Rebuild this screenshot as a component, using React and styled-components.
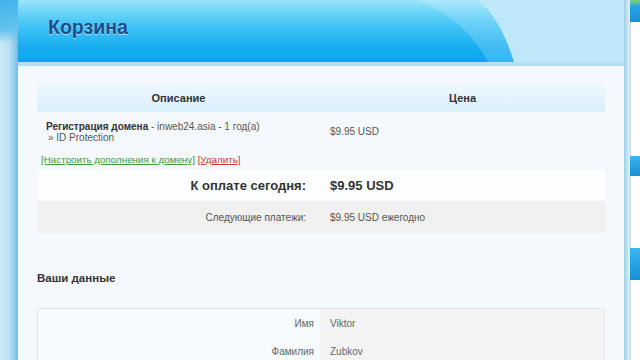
import React from "react";
import styled, { createGlobalStyle } from "styled-components";

const Global = createGlobalStyle`
  html, body {
    margin: 0;
    padding: 0;
    width: 640px;
    height: 360px;
    overflow: hidden;
    background: #f5f9fd;
    font-family: "Liberation Sans", Arial, sans-serif;
    color: #333;
  }
`;

const Page = styled.div`
  display: flex;
  width: 640px;
  height: 360px;
  overflow: hidden;
`;

const LeftStrip = styled.div`
  width: 18px;
  flex: none;
  background:
    linear-gradient(170deg, #3fb3e9 0, #64c3ee 30px, rgba(255, 255, 255, 0) 44px),
    linear-gradient(90deg, #cfeaf7 0, #b9e0f3 9px, #8ccbea 15px, #6fbbe3 18px);
`;

const Main = styled.div`
  width: 606px;
  flex: none;
  background: #f5f9fd;
`;

const Header = styled.div`
  position: relative;
  height: 62px;
  background: linear-gradient(180deg, #9ae3fb 0, #4cc8f6 22px, #16adf0 48px, #0aa7ee 62px);
  border-bottom: 4px solid #b5def0;
  overflow: hidden;
`;

const Wave = styled.svg`
  position: absolute;
  top: 0;
  left: 0;
  width: 606px;
  height: 62px;
`;

const Title = styled.h1`
  position: relative;
  margin: 0;
  padding: 16px 0 0 30px;
  font-size: 19.5px;
  font-weight: bold;
  color: #1b4d8d;
  text-shadow: 0 1px 1px rgba(255, 255, 255, 0.6);
`;

const Content = styled.div`
  padding: 18px 19px 0;
`;

const Table = styled.div`
  width: 568px;
`;

const HeadRow = styled.div`
  display: grid;
  grid-template-columns: 283px 285px;
  height: 28px;
  align-items: center;
  background: linear-gradient(180deg, #edf8fe 0, #d9effc 100%);
  font-size: 11px;
  font-weight: bold;
  color: #333;
  text-align: center;
`;

const ItemRow = styled.div`
  display: grid;
  grid-template-columns: 283px 285px;
  height: 38px;
  align-items: center;
  font-size: 10px;
  color: #555;
`;

const ItemDesc = styled.div`
  padding-left: 9px;
  line-height: 11px;
  margin-top: 2px;
  b {
    color: #333;
  }
`;

const Addon = styled.div`
  padding-left: 2px;
`;

const Cell = styled.div`
  padding-left: 10px;
`;

const Links = styled.div`
  padding: 4px 0 0 4px;
  height: 16px;
  font-size: 9.8px;
`;

const Link = styled.a`
  color: ${(p) => p.$color};
  text-decoration: underline;
  cursor: pointer;
`;

const SumRow = styled.div`
  display: grid;
  grid-template-columns: 283px 285px;
  height: ${(p) => p.$h}px;
  align-items: center;
  background: ${(p) => p.$bg};
  font-size: ${(p) => p.$size}px;
  font-weight: ${(p) => (p.$bold ? "bold" : "normal")};
  color: ${(p) => (p.$bold ? "#333" : "#555")};
`;

const SumLabel = styled.div`
  text-align: right;
  padding-right: 14px;
`;

const Section = styled.h2`
  margin: 39px 0 0;
  font-size: 11.5px;
  font-weight: bold;
  color: #333;
`;

const FormBox = styled.div`
  margin-top: 24px;
  width: 566px;
  border: 1px solid #dfe5ea;
  border-radius: 3px;
  background: linear-gradient(90deg, #f8fbfd 0, #f8fbfd 282px, #f4f4f4 282px);
`;

const FormRow = styled.div`
  display: grid;
  grid-template-columns: 276px 290px;
  height: 28px;
  align-items: center;
  font-size: 10px;
  color: #666;
`;

const FieldLabel = styled.div`
  text-align: right;
`;

const FieldValue = styled.div`
  padding-left: 16px;
`;

const RightStrip = styled.div`
  width: 16px;
  flex: none;
  display: flex;
  flex-direction: column;
  background: linear-gradient(90deg, #9ccfea 0, #d8ecf6 5px, #f2f8fc 9px, #ffffff 16px);
`;

const Block = styled.div`
  height: ${(p) => p.$h}px;
  margin-left: 6px;
  background: ${(p) => p.$bg};
  border-left: ${(p) => (p.$edge ? "1px solid #c9d6de" : "none")};
`;

export default function App() {
  return (
    <>
      <Global />
      <Page>
        <LeftStrip />
        <Main>
          <Header>
            <Wave viewBox="0 0 606 62" preserveAspectRatio="none">
              <path d="M398 0 L606 0 L606 62 L470 62 C455 34 432 12 398 0 Z" fill="#ffffff" opacity="0.18" />
              <path d="M460 0 L606 0 L606 62 L496 62 C488 36 477 14 460 0 Z" fill="#bde8f9" />
            </Wave>
            <Title>Корзина</Title>
          </Header>
          <Content>
            <Table>
              <HeadRow>
                <div>Описание</div>
                <div>Цена</div>
              </HeadRow>
              <ItemRow>
                <ItemDesc>
                  <b>Регистрация домена</b> - inweb24.asia - 1 год(а)
                  <Addon>» ID Protection</Addon>
                </ItemDesc>
                <Cell>$9.95 USD</Cell>
              </ItemRow>
              <Links>
                <Link $color="#3c9b3c">[Настроить дополнения к домену]</Link>{" "}
                <Link $color="#cc3333">[Удалить]</Link>
              </Links>
              <SumRow $h={31} $bg="#fdfeff" $size={13} $bold>
                <SumLabel>К оплате сегодня:</SumLabel>
                <Cell>$9.95 USD</Cell>
              </SumRow>
              <SumRow $h={32} $bg="#f0f0f0" $size={10}>
                <SumLabel>Следующие платежи:</SumLabel>
                <Cell>$9.95 USD ежегодно</Cell>
              </SumRow>
            </Table>
            <Section>Ваши данные</Section>
            <FormBox>
              <FormRow>
                <FieldLabel>Имя</FieldLabel>
                <FieldValue>Viktor</FieldValue>
              </FormRow>
              <FormRow>
                <FieldLabel>Фамилия</FieldLabel>
                <FieldValue>Zubkov</FieldValue>
              </FormRow>
            </FormBox>
          </Content>
        </Main>
        <RightStrip>
          <Block $h={22} $bg="linear-gradient(180deg, #7fd36a 0, #2aa6e8 6px, #1b8fd8 22px)" />
          <Block $h={134} $bg="#ffffff" $edge />
          <Block $h={20} $bg="linear-gradient(180deg, #3cb5ee, #1a8ed6)" />
          <Block $h={72} $bg="#ffffff" $edge />
          <Block $h={32} $bg="linear-gradient(180deg, #3cb5ee, #1a8ed6)" />
          <Block $h={80} $bg="#ffffff" $edge />
        </RightStrip>
      </Page>
    </>
  );
}
